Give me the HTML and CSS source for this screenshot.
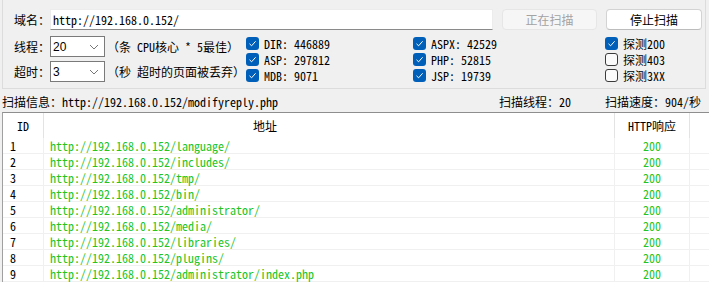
FILE: index.html
```html
<!DOCTYPE html>
<html lang="zh">
<head>
<meta charset="utf-8">
<title>扫描</title>
<link rel="stylesheet" href="styles.css">
</head>
<body>
<div class="app">
  <section class="group">
    <div class="row-top">
      <span class="lbl">域名：</span>
      <div class="input mono">http://192.168.0.152/</div>
      <button class="btn btn-disabled">正在扫描</button>
      <button class="btn">停止扫描</button>
    </div>
    <div class="row-opts">
      <div class="params">
        <div class="param">
          <span class="lbl">线程：</span>
          <div class="select"><span class="sel-val">20</span><svg class="chev" width="10" height="6" viewBox="0 0 10 6"><path d="M1 1 L5 5 L9 1" fill="none" stroke="#777" stroke-width="1"/></svg></div>
          <span class="hint mono">（条 CPU核心 * 5最佳）</span>
        </div>
        <div class="param">
          <span class="lbl">超时：</span>
          <div class="select"><span class="sel-val">3</span><svg class="chev" width="10" height="6" viewBox="0 0 10 6"><path d="M1 1 L5 5 L9 1" fill="none" stroke="#777" stroke-width="1"/></svg></div>
          <span class="hint mono">（秒 超时的页面被丢弃）</span>
        </div>
      </div>
      <div class="checks c1">
        <label class="chk"><span class="box on"><svg width="13" height="13" viewBox="0 0 13 13"><path d="M3.5 6.8 L5.6 8.8 L9.6 4.3" fill="none" stroke="#fff" stroke-width="1"/></svg></span><span class="mono">DIR: 446889</span></label>
        <label class="chk"><span class="box on"><svg width="13" height="13" viewBox="0 0 13 13"><path d="M3.5 6.8 L5.6 8.8 L9.6 4.3" fill="none" stroke="#fff" stroke-width="1"/></svg></span><span class="mono">ASP: 297812</span></label>
        <label class="chk"><span class="box on"><svg width="13" height="13" viewBox="0 0 13 13"><path d="M3.5 6.8 L5.6 8.8 L9.6 4.3" fill="none" stroke="#fff" stroke-width="1"/></svg></span><span class="mono">MDB: 9071</span></label>
      </div>
      <div class="checks c2">
        <label class="chk"><span class="box on"><svg width="13" height="13" viewBox="0 0 13 13"><path d="M3.5 6.8 L5.6 8.8 L9.6 4.3" fill="none" stroke="#fff" stroke-width="1"/></svg></span><span class="mono">ASPX: 42529</span></label>
        <label class="chk"><span class="box on"><svg width="13" height="13" viewBox="0 0 13 13"><path d="M3.5 6.8 L5.6 8.8 L9.6 4.3" fill="none" stroke="#fff" stroke-width="1"/></svg></span><span class="mono">PHP: 52815</span></label>
        <label class="chk"><span class="box on"><svg width="13" height="13" viewBox="0 0 13 13"><path d="M3.5 6.8 L5.6 8.8 L9.6 4.3" fill="none" stroke="#fff" stroke-width="1"/></svg></span><span class="mono">JSP: 19739</span></label>
      </div>
      <div class="checks c3">
        <label class="chk"><span class="box on"><svg width="13" height="13" viewBox="0 0 13 13"><path d="M3.5 6.8 L5.6 8.8 L9.6 4.3" fill="none" stroke="#fff" stroke-width="1"/></svg></span><span class="mono">探测200</span></label>
        <label class="chk"><span class="box"></span><span class="mono">探测403</span></label>
        <label class="chk"><span class="box"></span><span class="mono">探测3XX</span></label>
      </div>
    </div>
  </section>

  <div class="status mono">
    <span class="st-info">扫描信息：http://192.168.0.152/modifyreply.php</span>
    <span class="st-threads">扫描线程：20</span>
    <span class="st-speed">扫描速度：904/秒</span>
  </div>

  <div class="table">
    <div class="tr thead">
      <div class="td c-id">ID</div>
      <div class="td c-url">地址</div>
      <div class="td c-code">HTTP响应</div>
      <div class="td c-rest"></div>
    </div>
    <div class="tr"><div class="td c-id">1</div><div class="td c-url">http://192.168.0.152/language/</div><div class="td c-code">200</div><div class="td c-rest"></div></div>
    <div class="tr"><div class="td c-id">2</div><div class="td c-url">http://192.168.0.152/includes/</div><div class="td c-code">200</div><div class="td c-rest"></div></div>
    <div class="tr"><div class="td c-id">3</div><div class="td c-url">http://192.168.0.152/tmp/</div><div class="td c-code">200</div><div class="td c-rest"></div></div>
    <div class="tr"><div class="td c-id">4</div><div class="td c-url">http://192.168.0.152/bin/</div><div class="td c-code">200</div><div class="td c-rest"></div></div>
    <div class="tr"><div class="td c-id">5</div><div class="td c-url">http://192.168.0.152/administrator/</div><div class="td c-code">200</div><div class="td c-rest"></div></div>
    <div class="tr"><div class="td c-id">6</div><div class="td c-url">http://192.168.0.152/media/</div><div class="td c-code">200</div><div class="td c-rest"></div></div>
    <div class="tr"><div class="td c-id">7</div><div class="td c-url">http://192.168.0.152/libraries/</div><div class="td c-code">200</div><div class="td c-rest"></div></div>
    <div class="tr"><div class="td c-id">8</div><div class="td c-url">http://192.168.0.152/plugins/</div><div class="td c-code">200</div><div class="td c-rest"></div></div>
    <div class="tr"><div class="td c-id">9</div><div class="td c-url">http://192.168.0.152/administrator/index.php</div><div class="td c-code">200</div><div class="td c-rest"></div></div>
  </div>
</div>
</body>
</html>
```

FILE: styles.css
```css
* { box-sizing: border-box; }
html, body {
  margin: 0;
  padding: 0;
  background: #f0f0f0;
}
body {
  width: 709px;
  height: 282px;
  overflow: hidden;
  font-family: "Noto Sans CJK SC", "Microsoft YaHei", sans-serif;
  font-size: 12px;
  color: #000;
}
.mono {
  font-family: "Noto Sans Mono CJK SC", "Liberation Mono", "Noto Sans CJK SC", monospace;
  font-size: 12px;
}
.app { width: 709px; }

.group {
  margin: 0 3px 0 2px;
  height: 89px;
  padding-top: 9px;
  border: 1px solid #dcdcdc;
  border-top: none;
}
.row-top {
  display: flex;
  align-items: center;
  height: 21px;
  padding-left: 11px;
}
.lbl {
  width: 36px;
  flex: none;
  line-height: 14px;
  white-space: nowrap;
}
.input {
  width: 443px;
  height: 21px;
  background: #fff;
  border: 1px solid #ececec;
  border-bottom-color: #8a8a8a;
  padding-left: 2px;
  line-height: 19px;
  flex: none;
}
.btn {
  margin-left: 9px;
  width: 96px;
  height: 21px;
  padding: 0;
  font-family: "Noto Sans CJK SC", sans-serif;
  font-size: 12px;
  line-height: 19px;
  color: #000;
  background: #fff;
  border: 1px solid #d3d3d3;
  border-bottom-color: #bcbcbc;
  border-radius: 4px;
  flex: none;
}
.btn-disabled {
  width: 95px;
  color: #a3a3a3;
  background: #f6f6f6;
  border-color: #e6e6e6;
}

.row-opts {
  display: flex;
  margin-top: 5px;
}
.params {
  width: 243px;
  padding-top: 1px;
  display: flex;
  flex-direction: column;
  gap: 4px;
}
.param {
  display: flex;
  align-items: center;
  height: 21px;
  padding-left: 11px;
}
.select {
  width: 55px;
  height: 21px;
  flex: none;
  display: flex;
  align-items: center;
  justify-content: space-between;
  background: #fff;
  border: 1px solid #7a7a7a;
  padding: 0 5px 0 2px;
  font-family: "Liberation Sans", sans-serif;
  font-size: 12px;
}
.chev { display: block; }
.hint {
  margin-left: 2px;
  white-space: nowrap;
}

.checks {
  display: flex;
  flex-direction: column;
}
.c1 { width: 167px; }
.c2 { width: 192px; }
.c3 { flex: 1; }
.chk {
  display: flex;
  align-items: center;
  height: 16px;
  gap: 5px;
  white-space: nowrap;
}
.box {
  width: 13px;
  height: 13px;
  flex: none;
  border-radius: 3px;
  border: 1px solid #3b3b3b;
  background: #fbfbfb;
}
.box.on {
  border: none;
  background: #005fb8;
}
.box svg { display: block; }

.status {
  display: flex;
  align-items: flex-end;
  height: 23px;
  padding: 0 8px 3px 2px;
  line-height: 14px;
  white-space: nowrap;
}
.st-info { flex: 1; }
.st-speed { margin-left: 34px; }

.table {
  margin-left: 2px;
  border-top: 1px solid #8e8e8e;
  border-left: 1px solid #a0a0a0;
  background: #fff;
  height: 170px;
}
.tr {
  display: grid;
  grid-template-columns: 41px 571px 75px 1fr;
  height: 16px;
  border-bottom: 1px solid #f0f0f0;
}
.tr.thead {
  height: 25px;
  border-bottom: none;
}
.td {
  border-right: 1px solid #f0f0f0;
  display: flex;
  align-items: center;
  white-space: nowrap;
  font-family: "Noto Sans Mono CJK SC", "Liberation Mono", monospace;
  font-size: 12px;
  line-height: 14px;
  color: #24c424;
}
.thead .td {
  color: #000;
  border-right-color: #e3e3e3;
}
.c-rest { border-right: none; }
.c-id { padding-left: 7px; color: #000; }
.c-url { padding-left: 6px; }
.c-code { justify-content: center; }
.thead .c-id { padding-left: 0; justify-content: center; }
.thead .c-url { padding-left: 209px; }
```
